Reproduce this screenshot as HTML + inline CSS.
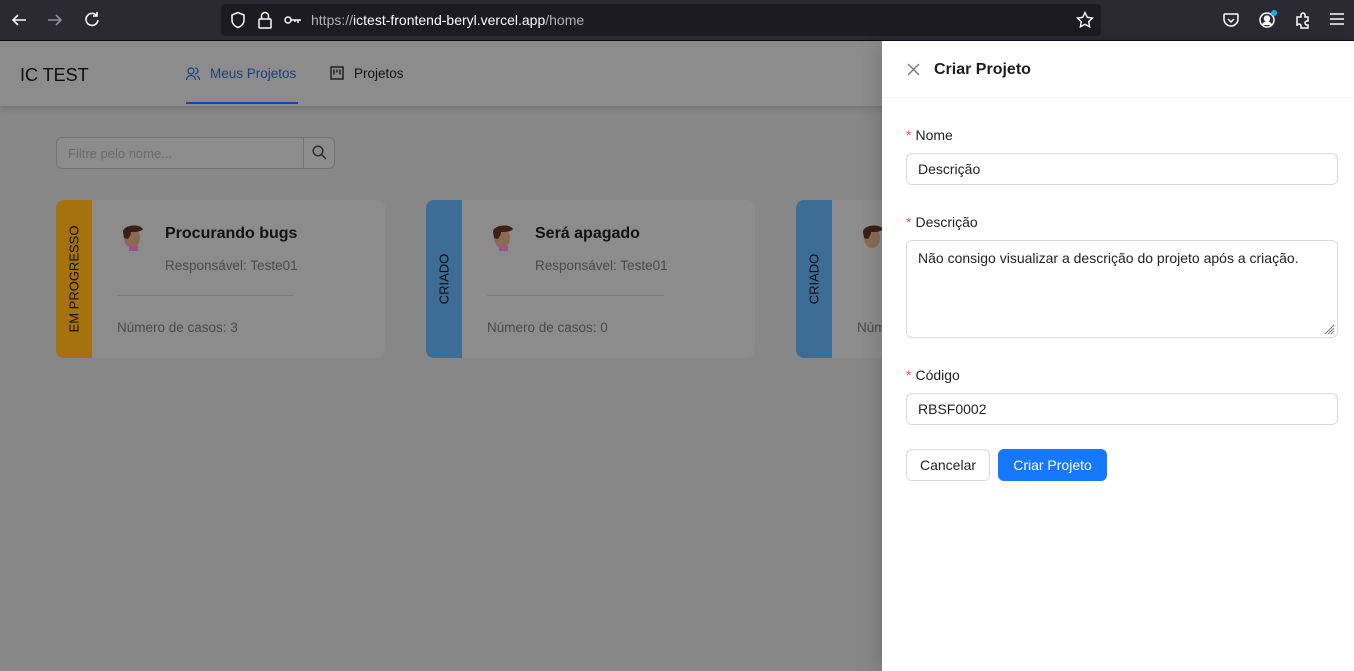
<!DOCTYPE html>
<html><head><meta charset="utf-8"><style>
*{box-sizing:border-box;margin:0;padding:0}
body{width:1354px;height:671px;overflow:hidden;font-family:"Liberation Sans",sans-serif;background:#878787;position:relative;font-size:14px}
.bar{position:absolute;left:0;top:0;width:1354px;height:41px;background:#2b2a33;border-bottom:1px solid #0c0c0d}
.url{position:absolute;left:221px;top:4px;width:880px;height:32px;background:#1c1b22;border-radius:4px}
.url span{position:absolute;left:90px;top:8px;color:#fbfbfe;font-size:14px}
.hdr{position:absolute;left:0;top:41px;width:1354px;height:65px;background:#8c8c8c;box-shadow:0 2px 6px rgba(0,0,0,.15)}
.abs{position:absolute}
.card{position:absolute;top:200px;width:329px;height:158px;background:#8c8c8c;border-radius:8px;overflow:hidden}
.strip{position:absolute;left:0;top:0;width:36px;height:158px}
.strip span{position:absolute;left:18px;top:79px;transform:translate(-50%,-50%) rotate(-90deg);white-space:nowrap;color:#0f0f0f;font-size:13px}
.drawer{position:absolute;left:882px;top:41px;width:472px;height:630px;background:#fff;box-shadow:-6px 0 16px rgba(0,0,0,.12)}
.lbl{position:absolute;left:24px;font-size:14px;color:#222}
.lbl b{color:#ff4d4f;font-weight:normal;margin-right:4px}
.inp{position:absolute;left:24px;width:432px;border:1px solid #d9d9d9;border-radius:6px;padding:0 11px;color:#222;font-size:14px}
</style></head><body>
<div class="bar">
<svg class="abs" style="left:10px;top:11px" width="18" height="18" viewBox="0 0 18 18" fill="none" stroke="#fbfbfe" stroke-width="1.6"><path d="M16 9H3M8 4L3 9l5 5"/></svg>
<svg class="abs" style="left:46px;top:11px" width="18" height="18" viewBox="0 0 18 18" fill="none" stroke="#8f8f9d" stroke-width="1.6"><path d="M2 9h13M10 4l5 5-5 5"/></svg>
<svg class="abs" style="left:83px;top:11px" width="18" height="18" viewBox="0 0 18 18" fill="none" stroke="#fbfbfe" stroke-width="1.6"><path d="M14 5A6 6 0 1 0 15 9M14 1v4h-4"/></svg>
<div class="url">
<svg class="abs" style="left:8px;top:7px" width="18" height="18" viewBox="0 0 18 18" fill="none" stroke="#fbfbfe" stroke-width="1.5"><path d="M9 1.5L3 4v5c0 4 3 6.5 6 7.5 3-1 6-3.5 6-7.5V4z"/></svg>
<svg class="abs" style="left:36px;top:7px" width="16" height="18" viewBox="0 0 16 18" fill="none" stroke="#fbfbfe" stroke-width="1.5"><rect x="2" y="8" width="12" height="9" rx="1"/><path d="M4.5 8V5a3.5 3.5 0 0 1 7 0v3"/></svg>
<svg class="abs" style="left:63px;top:10px" width="18" height="12" viewBox="0 0 18 12" fill="none" stroke="#fbfbfe" stroke-width="1.5"><circle cx="4" cy="6" r="3"/><path d="M7 6h10M14 6v3M11 6v2"/></svg>
<span><span style="position:static;color:#b0b0b8">https://</span>ictest-frontend-beryl.vercel.app<span style="position:static;color:#b0b0b8">/home</span></span>
<svg class="abs" style="left:855px;top:7px" width="18" height="18" viewBox="0 0 18 18" fill="none" stroke="#fbfbfe" stroke-width="1.4"><path d="M9 1.5l2.3 4.8 5.2.7-3.8 3.6.9 5.2L9 13.3l-4.6 2.5.9-5.2L1.5 7l5.2-.7z"/></svg>
</div>
<svg class="abs" style="left:1222px;top:11px" width="18" height="18" viewBox="0 0 18 18" fill="none" stroke="#fbfbfe" stroke-width="1.5"><path d="M3 3h12a1 1 0 0 1 1 1v4a7 7 0 0 1-14 0V4a1 1 0 0 1 1-1zM6 8l3 3 3-3"/></svg>
<svg class="abs" style="left:1258px;top:11px" width="18" height="18" viewBox="0 0 18 18" fill="none" stroke="#fbfbfe" stroke-width="1.5"><circle cx="9" cy="9" r="7"/><circle cx="9" cy="7.5" r="2.5" fill="#fbfbfe"/><path d="M4.5 14a5 5 0 0 1 9 0" fill="#fbfbfe"/></svg>
<div class="abs" style="left:1271px;top:10px;width:6px;height:6px;border-radius:3px;background:#00b3f4"></div>
<svg class="abs" style="left:1294px;top:11px" width="18" height="18" viewBox="0 0 18 18" fill="none" stroke="#fbfbfe" stroke-width="1.5"><path d="M3 6h4V4a2 2 0 0 1 4 0v2h3v4h-1a2 2 0 0 0 0 4h1v3H7v-2a2 2 0 0 0-4 0z"/></svg>
<svg class="abs" style="left:1330px;top:12px" width="14" height="14" viewBox="0 0 14 14" stroke="#fbfbfe" stroke-width="1.5"><path d="M0 2h14M0 7h14M0 12h14"/></svg>
</div>
<div class="hdr">
<div class="abs" style="left:20px;top:24px;font-size:18px;color:#0d0d0d">IC TEST</div>
<svg class="abs" style="left:186px;top:26px" width="14" height="14" viewBox="0 0 14 14" fill="none" stroke="#1a3f80" stroke-width="1.2"><circle cx="5" cy="4" r="3"/><path d="M0.5 13a4.5 4.5 0 0 1 9 0M9 1a3 3 0 0 1 0 6M11 9a4 4 0 0 1 2.5 4"/></svg>
<div class="abs" style="left:210px;top:25px;color:#1a3f80;font-size:13.5px">Meus Projetos</div>
<div class="abs" style="left:186px;top:61px;width:112px;height:2px;background:#1147a0"></div>
<svg class="abs" style="left:330px;top:25px" width="14" height="14" viewBox="0 0 14 14" fill="none" stroke="#111" stroke-width="1.3"><rect x="1" y="1" width="12" height="12"/><path d="M4 3.5v5M7 3.5v3M10 3.5v5"/></svg>
<div class="abs" style="left:354px;top:25px;color:#111;font-size:13.5px">Projetos</div>
</div>
<div class="abs" style="left:56px;top:137px;width:279px;height:32px;border:1px solid #737373;border-radius:6px;background:#8c8c8c"><span class="abs" style="left:11px;top:8px;color:#6a6a6a;font-size:13px">Filtre pelo nome...</span><div class="abs" style="left:246px;top:-1px;width:32px;height:32px;border-left:1px solid #737373"></div>
<svg class="abs" style="left:255px;top:7px" width="15" height="15" viewBox="0 0 15 15" fill="none" stroke="#2a2a2a" stroke-width="1.4"><circle cx="6" cy="6" r="4.8"/><path d="M9.5 9.5L14 14"/></svg></div>

<div class="card" style="left:56px"><div class="strip" style="background:#a5720f"><span>EM PROGRESSO</span></div>
<svg class="abs" style="left:64px;top:22px" width="26" height="30" viewBox="0 0 26 30"><ellipse cx="12" cy="16" rx="8" ry="10" fill="#8a6a55"/><path d="M3 10c0-7 16-9 20-3-2 3-8 3-12 3 0 3-2 5-3 7L4 16z" fill="#3a1f12"/><rect x="9" y="24" width="9" height="5" fill="#a0508a"/></svg>
<div class="abs" style="left:109px;top:25px;font-size:16px;font-weight:bold;color:#121212">Procurando bugs</div>
<div class="abs" style="left:109px;top:58px;color:#4a4a4a;font-size:13.5px">Responsável: Teste01</div>
<div class="abs" style="left:61px;top:95px;width:177px;height:1px;background:#7e7e7e"></div>
<div class="abs" style="left:61px;top:120px;color:#4a4a4a;font-size:13.5px">Número de casos: 3</div></div>

<div class="card" style="left:426px"><div class="strip" style="background:#3d6c94"><span>CRIADO</span></div>
<svg class="abs" style="left:64px;top:22px" width="26" height="30" viewBox="0 0 26 30"><ellipse cx="12" cy="16" rx="8" ry="10" fill="#8a6a55"/><path d="M3 10c0-7 16-9 20-3-2 3-8 3-12 3 0 3-2 5-3 7L4 16z" fill="#3a1f12"/><rect x="9" y="24" width="9" height="5" fill="#a0508a"/></svg>
<div class="abs" style="left:109px;top:25px;font-size:16px;font-weight:bold;color:#121212">Será apagado</div>
<div class="abs" style="left:109px;top:58px;color:#4a4a4a;font-size:13.5px">Responsável: Teste01</div>
<div class="abs" style="left:61px;top:95px;width:177px;height:1px;background:#7e7e7e"></div>
<div class="abs" style="left:61px;top:120px;color:#4a4a4a;font-size:13.5px">Número de casos: 0</div></div>

<div class="card" style="left:796px"><div class="strip" style="background:#3d6c94"><span>CRIADO</span></div>
<svg class="abs" style="left:64px;top:22px" width="26" height="30" viewBox="0 0 26 30"><ellipse cx="12" cy="16" rx="8" ry="10" fill="#8a6a55"/><path d="M3 10c0-7 16-9 20-3-2 3-8 3-12 3 0 3-2 5-3 7L4 16z" fill="#3a1f12"/></svg>
<div class="abs" style="left:61px;top:120px;color:#4a4a4a;font-size:13.5px">Número de casos: 0</div></div>

<div class="drawer">
<svg class="abs" style="left:25px;top:22px" width="13" height="13" viewBox="0 0 13 13" stroke="#777" stroke-width="1.3"><path d="M1 1l11 11M12 1L1 12"/></svg>
<div class="abs" style="left:52px;top:20px;font-size:16px;font-weight:bold;color:#1d1d1d">Criar Projeto</div>
<div class="abs" style="left:0;top:56px;width:472px;height:1px;background:#eee"></div>
<div class="lbl" style="top:86px"><b>*</b>Nome</div>
<div class="inp" style="top:112px;height:32px;line-height:30px">Descrição</div>
<div class="lbl" style="top:173px"><b>*</b>Descrição</div>
<div class="inp" style="top:199px;height:98px;padding-top:8px;line-height:18px">Não consigo visualizar a descrição do projeto após a criação.
<svg class="abs" style="right:2px;bottom:2px" width="12" height="12" viewBox="0 0 12 12" stroke="#777" stroke-width="1"><path d="M11 2L2 11M11 5L5 11M11 8L8 11"/></svg></div>
<div class="lbl" style="top:326px"><b>*</b>Código</div>
<div class="inp" style="top:352px;height:32px;line-height:30px">RBSF0002</div>
<div class="abs" style="left:24px;top:408px;width:84px;height:32px;border:1px solid #d9d9d9;border-radius:6px;text-align:center;line-height:30px;color:#222">Cancelar</div>
<div class="abs" style="left:116px;top:408px;width:109px;height:32px;background:#1677ff;border-radius:6px;text-align:center;line-height:32px;color:#fff">Criar Projeto</div>
</div>
</body></html>
